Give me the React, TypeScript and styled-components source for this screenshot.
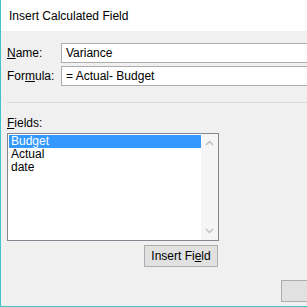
import React from 'react'
import styled, { createGlobalStyle } from 'styled-components'

const GlobalStyle = createGlobalStyle`
  html, body {
    margin: 0;
    padding: 0;
    background: #f0f0f0;
  }
  body {
    font-family: 'Liberation Sans', Arial, sans-serif;
    font-size: 12px;
    color: #000;
  }
`

const Window = styled.div`
  width: 307px;
  height: 307px;
  box-sizing: border-box;
  border-left: 1px solid #3fc5c9;
  border-bottom: 1px solid #3fc5c9;
  overflow: hidden;
  background: #f0f0f0;
`

const Dialog = styled.div`
  width: 446px;
  display: flex;
  flex-direction: column;
`

const TitleBar = styled.div`
  height: 31px;
  background: #fff;
  display: flex;
  align-items: center;
  padding-left: 8px;
  font-size: 12px;
`

const Body = styled.div`
  display: flex;
  flex-direction: column;
  padding: 12px 10px 0 6px;
`

const FieldRow = styled.div`
  display: flex;
  align-items: center;
  height: 20px;
  & + & {
    margin-top: 3px;
  }
`

const Label = styled.label`
  width: 54px;
  flex: none;
`

const Key = styled.span`
  text-decoration: underline;
  text-underline-offset: 1px;
`

const TextBox = styled.div`
  flex: 1;
  height: 20px;
  box-sizing: border-box;
  border: 1px solid #adadad;
  background: #fff;
  display: flex;
  align-items: center;
  padding-left: 4px;
`

const Separator = styled.div`
  height: 1px;
  background: #dadada;
  margin-top: 16px;
`

const FieldsLabel = styled.label`
  margin-top: 13px;
  line-height: 14px;
`

const ListColumn = styled.div`
  width: 212px;
  display: flex;
  flex-direction: column;
  align-items: flex-end;
  margin-top: 3px;
`

const ListBox = styled.div`
  width: 212px;
  height: 108px;
  box-sizing: border-box;
  border: 1px solid #828790;
  background: #fff;
  display: flex;
`

const Items = styled.div`
  flex: 1;
  padding: 1px 0 1px 1px;
  display: flex;
  flex-direction: column;
`

const Item = styled.div<{ $selected?: boolean }>`
  height: 13px;
  line-height: 13px;
  padding-left: 2px;
  background: ${p => (p.$selected ? '#3399ff' : 'transparent')};
  color: ${p => (p.$selected ? '#fff' : '#000')};
`

const ScrollBar = styled.div`
  width: 17px;
  background: #f5f5f5;
  display: flex;
  flex-direction: column;
  justify-content: space-between;
  align-items: center;
  padding: 6px 0;
`

const Button = styled.div<{ $width: number }>`
  width: ${p => p.$width}px;
  height: 22px;
  box-sizing: border-box;
  border: 1px solid #adadad;
  background: #e1e1e1;
  display: flex;
  align-items: center;
  justify-content: center;
`

const InsertButton = styled(Button)`
  margin-top: 4px;
  margin-right: 1px;
`

const Footer = styled.div`
  display: flex;
  justify-content: flex-end;
  gap: 6px;
  margin-top: 13px;
`

const Chevron = ({ up }: { up?: boolean }) => (
  <svg width="9" height="6" viewBox="0 0 9 6">
    <path
      d={up ? 'M1 5 L4.5 1.5 L8 5' : 'M1 1 L4.5 4.5 L8 1'}
      fill="none"
      stroke="#c1c1c1"
      strokeWidth="1.5"
    />
  </svg>
)

const fields = ['Budget', 'Actual', 'date']

export default function App() {
  return (
    <>
      <GlobalStyle />
      <Window>
        <Dialog>
          <TitleBar>Insert Calculated Field</TitleBar>
          <Body>
            <FieldRow>
              <Label>
                <Key>N</Key>ame:
              </Label>
              <TextBox>Variance</TextBox>
            </FieldRow>
            <FieldRow>
              <Label>
                For<Key>m</Key>ula:
              </Label>
              <TextBox>= Actual- Budget</TextBox>
            </FieldRow>
            <Separator />
            <FieldsLabel>
              <Key>F</Key>ields:
            </FieldsLabel>
            <ListColumn>
              <ListBox>
                <Items>
                  {fields.map((f, i) => (
                    <Item key={f} $selected={i === 0}>
                      {f}
                    </Item>
                  ))}
                </Items>
                <ScrollBar>
                  <Chevron up />
                  <Chevron />
                </ScrollBar>
              </ListBox>
              <InsertButton $width={74}>
                Insert Fi<Key>e</Key>ld
              </InsertButton>
            </ListColumn>
            {/* OK / Cancel sit past the visible edge; only OK's left side shows */}
            <Footer>
              <Button $width={75} aria-label="OK" />
              <Button $width={75} aria-label="Cancel" />
            </Footer>
          </Body>
        </Dialog>
      </Window>
    </>
  )
}
